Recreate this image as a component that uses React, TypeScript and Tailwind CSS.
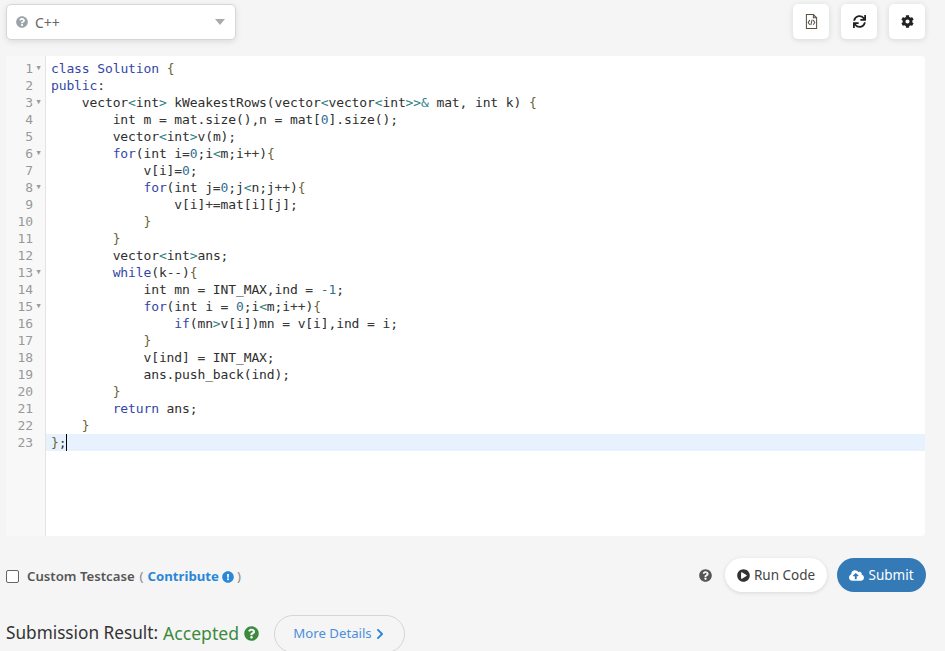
import React from "react";
import { FaQuestionCircle, FaSync, FaCog, FaExclamationCircle, FaPlayCircle, FaCloudUploadAlt, FaChevronRight } from "react-icons/fa";

const K = ({ children }: { children: React.ReactNode }) => <span className="text-[#3346a8]">{children}</span>;
const A = ({ children }: { children: React.ReactNode }) => <span className="text-[#2f7f86]">{children}</span>;
const O = ({ children }: { children: React.ReactNode }) => <span className="text-[#3a3a3a]">{children}</span>;
const B = ({ children }: { children: React.ReactNode }) => <span className="text-[#6b6436]">{children}</span>;
const N = ({ children }: { children: React.ReactNode }) => <span className="text-[#2f6f8f]">{children}</span>;

const lines: React.ReactNode[] = [
  <><K>class</K> <K>Solution</K> <B>{"{"}</B></>,
  <><K>public</K>:</>,
  <>{"    "}vector<A>&lt;</A>int<A>&gt;</A> kWeakestRows(vector<A>&lt;</A>vector<A>&lt;</A>int<A>&gt;&gt;&amp;</A> mat, int k) <B>{"{"}</B></>,
  <>{"        "}int m <O>=</O> mat.size(),n <O>=</O> mat[<N>0</N>].size();</>,
  <>{"        "}vector<A>&lt;</A>int<A>&gt;</A>v(m);</>,
  <>{"        "}<K>for</K>(int i<O>=</O><N>0</N>;i<A>&lt;</A>m;i<O>++</O>)<B>{"{"}</B></>,
  <>{"            "}v[i]<O>=</O><N>0</N>;</>,
  <>{"            "}<K>for</K>(int j<O>=</O><N>0</N>;j<A>&lt;</A>n;j<O>++</O>)<B>{"{"}</B></>,
  <>{"                "}v[i]<O>+=</O>mat[i][j];</>,
  <>{"            "}<B>{"}"}</B></>,
  <>{"        "}<B>{"}"}</B></>,
  <>{"        "}vector<A>&lt;</A>int<A>&gt;</A>ans;</>,
  <>{"        "}<K>while</K>(k<O>--</O>)<B>{"{"}</B></>,
  <>{"            "}int mn <O>=</O> INT_MAX,ind <O>=</O> <N>-1</N>;</>,
  <>{"            "}<K>for</K>(int i <O>=</O> <N>0</N>;i<A>&lt;</A>m;i<O>++</O>)<B>{"{"}</B></>,
  <>{"                "}<K>if</K>(mn<A>&gt;</A>v[i])mn <O>=</O> v[i],ind <O>=</O> i;</>,
  <>{"            "}<B>{"}"}</B></>,
  <>{"            "}v[ind] <O>=</O> INT_MAX;</>,
  <>{"            "}ans.push_back(ind);</>,
  <>{"        "}<B>{"}"}</B></>,
  <>{"        "}<K>return</K> ans;</>,
  <>{"    "}<B>{"}"}</B></>,
  <><B>{"}"}</B>;<span className="inline-block w-px h-[17px] bg-black align-top" /></>,
];
const folds = new Set([1, 3, 6, 8, 13, 15]);

const IconBtn = ({ children }: { children: React.ReactNode }) => (
  <button className="w-[36px] h-[35px] bg-white rounded-[5px] shadow-[0_1px_6px_rgba(0,0,0,0.12)] flex items-center justify-center text-[#333]">{children}</button>
);

export default function App() {
  return (
    <div className="w-[945px] h-[651px] overflow-hidden bg-[#f5f5f5] font-['Noto_Sans','Open_Sans',sans-serif] text-[#333]">
      <div className="flex items-start justify-between pl-[6px] pr-[20px] pt-[4px] h-[56px]">
        <div className="w-[230px] h-[36px] bg-white border border-[#d6d6d6] rounded-[5px] shadow-[0_2px_6px_rgba(0,0,0,0.1)] flex items-center pl-[9px] pr-[10px]">
          <FaQuestionCircle className="text-[#9aa3a8] text-[12px]" />
          <span className="ml-[7px] text-[14px] text-[#666]">C++</span>
          <span className="ml-auto w-0 h-0 border-l-[5.5px] border-r-[5.5px] border-t-[6px] border-l-transparent border-r-transparent border-t-[#aaa]" />
        </div>
        <div className="flex gap-[12px]">
          <IconBtn>
            <svg width="13" height="15" viewBox="0 0 14 16" fill="none" stroke="#5a5040" strokeWidth="1.1">
              <path d="M1.5 .5h7.5l3.5 3.5v11.5h-11z" />
              <path d="M9 .5v3.5h3.5" />
              <path d="M5.2 6.5 3.4 9l1.8 2.5M8.8 6.5 10.6 9l-1.8 2.5M7.7 6 6.3 12" />
            </svg>
          </IconBtn>
          <IconBtn><FaSync className="text-[13px] text-[#222]" /></IconBtn>
          <IconBtn><FaCog className="text-[13px] text-[#222]" /></IconBtn>
        </div>
      </div>
      <div className="ml-[6px] w-[919px] h-[480px] bg-white rounded-[4px] flex overflow-hidden font-['DejaVu_Sans_Mono',monospace] text-[13px] leading-[17px] tracking-[-0.12px]">
        <div className="w-[40px] shrink-0 bg-[#f8f8f8] border-r border-[#e3e3e3] pt-[4px] text-[#999]">
          {lines.map((_, i) => (
            <div key={i} className="h-[17px] flex items-center justify-end pr-[3px]">
              <span>{i + 1}</span>
              <span className="w-[9px] pl-[2px] text-center text-[7px] text-[#999]">{folds.has(i + 1) ? "▼" : ""}</span>
            </div>
          ))}
        </div>
        <div className="flex-1 pt-[4px] text-[#2e2e2e]">
          {lines.map((l, i) => (
            <div key={i} className={`h-[17px] pl-[5px] whitespace-pre ${i === 22 ? "bg-[#e8f2ff]" : ""}`}>{l}</div>
          ))}
        </div>
      </div>
      <div className="flex items-center justify-between pl-[6px] pr-[19px] mt-[21px] h-[36px]">
        <div className="flex items-center text-[13.2px] pt-[4px]">
          <span className="w-[13px] h-[13px] bg-white border border-[#666] rounded-[2px]" />
          <span className="ml-[8px] font-semibold text-[#555]">Custom Testcase</span>
          <span className="ml-[5px] text-[#888]">(</span>
          <span className="ml-[4px] font-bold text-[#2a87d8]">Contribute</span>
          <FaExclamationCircle className="ml-[3px] text-[#2a87d8] text-[12px]" />
          <span className="ml-[3px] text-[#888]">)</span>
        </div>
        <div className="flex items-center">
          <FaQuestionCircle className="text-[#555] text-[13px]" />
          <button className="ml-[13px] w-[102px] h-[34px] bg-white rounded-full shadow-[0_1px_4px_rgba(0,0,0,0.12)] flex items-center justify-center gap-[4px] text-[13.5px] text-[#444]">
            <FaPlayCircle className="text-[13px] text-[#333]" />Run Code
          </button>
          <button className="ml-[10px] w-[89px] h-[34px] bg-[#337ab7] rounded-full flex items-center justify-center gap-[4px] text-[13.5px] text-white">
            <FaCloudUploadAlt className="text-[15px]" />Submit
          </button>
        </div>
      </div>
      <div className="flex items-center pl-[6px] mt-[20px]">
        <span className="text-[17.2px] text-[#333]">Submission Result:</span>
        <span className="ml-[5px] text-[17.6px] text-[#3c8a3e]">Accepted</span>
        <FaQuestionCircle className="ml-[5px] text-[#3c8a3e] text-[15px]" />
        <button className="ml-[15px] mt-[2px] w-[131px] h-[38px] rounded-full border border-[#d5d5d5] flex items-center justify-center gap-[2px] text-[13.2px] text-[#4a90d9]">
          More Details <FaChevronRight className="text-[12px] text-[#2a87d8]" />
        </button>
      </div>
    </div>
  );
}
